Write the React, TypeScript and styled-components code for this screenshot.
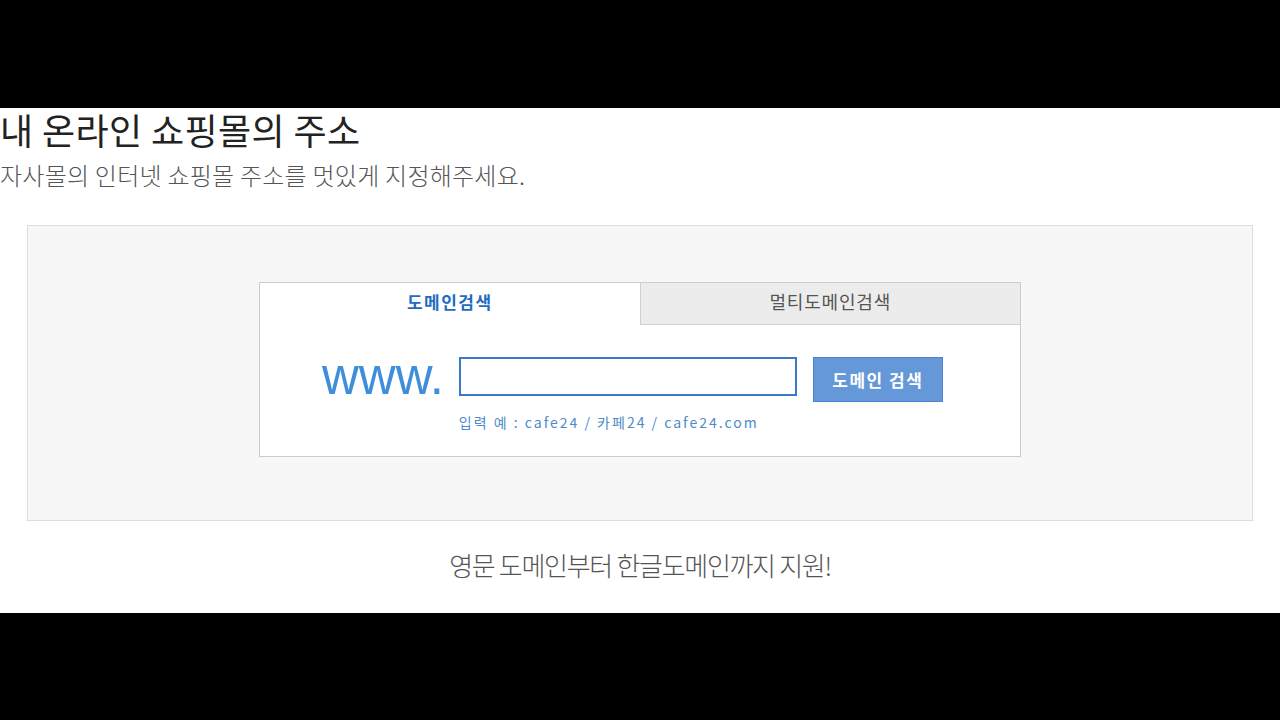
import styled, { createGlobalStyle } from 'styled-components';

const GlobalStyle = createGlobalStyle`
  html, body {
    margin: 0;
    padding: 0;
    background: #000;
  }
  body {
    font-family: 'Noto Sans CJK KR', 'Noto Sans', sans-serif;
  }
`;

const Screen = styled.div`
  width: 1280px;
  height: 720px;
  display: flex;
  flex-direction: column;
  justify-content: center;
`;

const Page = styled.main`
  height: 505px;
  box-sizing: border-box;
  padding-top: 2px;
  background: #fff;
  display: flex;
  flex-direction: column;
`;

const Title = styled.h1`
  margin: 0;
  font-size: 36px;
  line-height: 38px;
  font-weight: 400;
  letter-spacing: 0.4px;
  color: #222;
`;

const Subtitle = styled.p`
  margin: 11px 0 0;
  font-size: 24px;
  line-height: 32px;
  font-weight: 300;
  letter-spacing: 0.25px;
  color: #555;
`;

const SearchArea = styled.section`
  margin: 34px 27px 0;
  height: 296px;
  box-sizing: border-box;
  background: #f7f7f7;
  border: 1px solid #ddd;
  display: flex;
  justify-content: center;
  padding-top: 56px;
`;

const Panel = styled.div`
  width: 762px;
  height: 175px;
  box-sizing: border-box;
  background: #fff;
  border: 1px solid #ccc;
  display: flex;
  flex-direction: column;
`;

const Tabs = styled.div`
  display: flex;
  height: 42px;
`;

const Tab = styled.div<{ $active?: boolean }>`
  flex: 1;
  display: flex;
  align-items: center;
  justify-content: center;
  box-sizing: border-box;
  font-size: ${({ $active }) => ($active ? '17px' : '18px')};
  font-weight: ${({ $active }) => ($active ? 700 : 400)};
  letter-spacing: ${({ $active }) => ($active ? '1.5px' : '0.8px')};
  color: ${({ $active }) => ($active ? '#1f6cc2' : '#555')};
  background: ${({ $active }) => ($active ? '#fff' : '#ececec')};
  border-left: ${({ $active }) => ($active ? 'none' : '1px solid #d0d0d0')};
  border-bottom: ${({ $active }) => ($active ? 'none' : '1px solid #d0d0d0')};
  padding-bottom: 4px;
`;

const FormRow = styled.div`
  display: flex;
  align-items: flex-start;
  padding: 32px 0 0 62px;
`;

const Prefix = styled.span`
  font-family: 'Liberation Sans', Arial, sans-serif;
  font-size: 51px;
  line-height: 39px;
  height: 39px;
  color: #3f8edb;
  margin-right: 15px;
`;

const InputColumn = styled.div`
  display: flex;
  flex-direction: column;
`;

const DomainInput = styled.input`
  width: 338px;
  height: 39px;
  box-sizing: border-box;
  border: 2px solid #3a78cc;
  background: #fff;
  outline: none;
  padding: 0 8px;
  font-size: 16px;
`;

const Hint = styled.span`
  margin-top: 16px;
  font-family: 'Noto Sans CJK KR', 'Liberation Sans', sans-serif;
  font-size: 14px;
  line-height: 20px;
  letter-spacing: 2px;
  color: #4d8bc9;
`;

const SearchButton = styled.button`
  margin-left: 16px;
  width: 130px;
  height: 45px;
  background: #6498d8;
  border: 1px solid #4c82c9;
  color: #fff;
  font-family: 'Noto Sans CJK KR', sans-serif;
  font-size: 17px;
  font-weight: 700;
  letter-spacing: 1.5px;
  cursor: pointer;
`;

const Footnote = styled.p`
  margin: 26px 0 0;
  text-align: center;
  font-size: 26px;
  line-height: 36px;
  font-weight: 300;
  letter-spacing: -1.3px;
  color: #555;
`;

export default function App() {
  return (
    <>
      <GlobalStyle />
      <Screen>
        <Page>
          <Title>내 온라인 쇼핑몰의 주소</Title>
          <Subtitle>자사몰의 인터넷 쇼핑몰 주소를 멋있게 지정해주세요.</Subtitle>
          <SearchArea>
            <Panel>
              <Tabs>
                <Tab $active>도메인검색</Tab>
                <Tab>멀티도메인검색</Tab>
              </Tabs>
              <FormRow>
                <Prefix>www.</Prefix>
                <InputColumn>
                  <DomainInput type="text" />
                  <Hint>입력 예 : cafe24 / 카페24 / cafe24.com</Hint>
                </InputColumn>
                <SearchButton type="button">도메인 검색</SearchButton>
              </FormRow>
            </Panel>
          </SearchArea>
          <Footnote>영문 도메인부터 한글도메인까지 지원!</Footnote>
        </Page>
      </Screen>
    </>
  );
}
